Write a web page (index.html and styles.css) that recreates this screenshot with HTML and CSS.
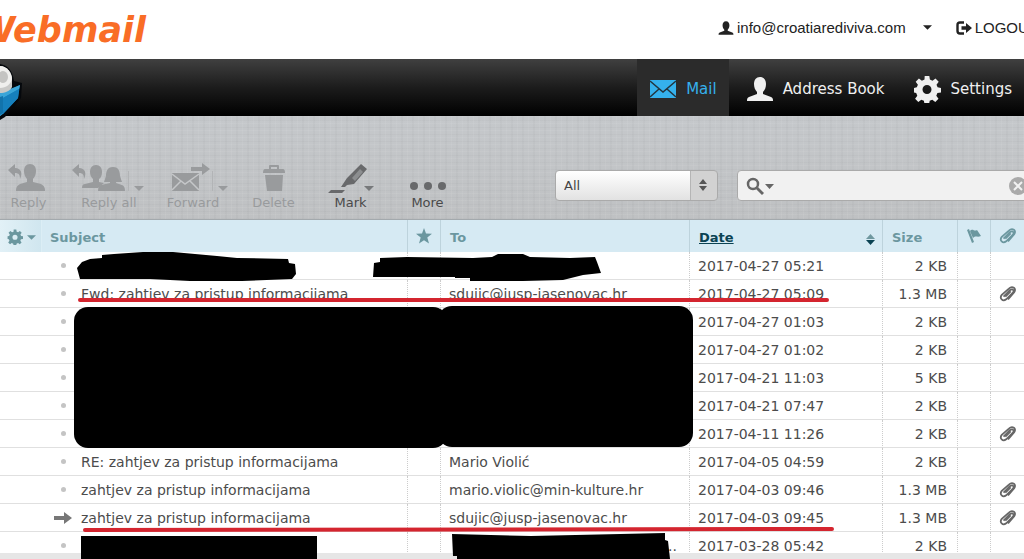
FILE: index.html
```html
<!DOCTYPE html>
<html lang="en">
<head>
    <meta charset="UTF-8">
    <meta name="viewport" content="width=device-width, initial-scale=1.0">
    <title>Webmail</title>
    <link rel="stylesheet" href="styles.css">
</head>
<body>
    <svg class="sprite" aria-hidden="true">
        <symbol id="person" viewBox="0 0 28 28">
            <path d="M14 2c4 0 6 3 6 7 0 3-1 6-3 8v2l8 3c2 1 2 2 2 4H1c0-2 0-3 2-4l8-3v-2c-2-2-3-5-3-8 0-4 2-7 6-7z"/>
        </symbol>
        <symbol id="gear" viewBox="0 0 28 28">
            <path fill-rule="evenodd" d="M11.700 1h4.600l.6 3.600 2.600 1.100 3-2.200 3.200 3.200-2.200 3 1.100 2.600 3.400.6v4.600l-3.600.6-1.100 2.600 2.200 3-3.200 3.200-3-2.200-2.600 1.100-.6 3.200h-4.600l-.6-3.200-2.600-1.100-3 2.200-3.200-3.200 2.200-3-1.100-2.600L1 17.500v-4.600l2.800-.6 1.100-2.600-2.200-3 3.200-3.200 3 2.200 2.600-1.100zM14 10a4.500 4.500 0 1 0 0 9 4.500 4.500 0 0 0 0-9z"/>
        </symbol>
        <symbol id="clip" viewBox="0 0 20 18">
            <path d="M5 12l7-7c3-3 6 0 3 3l-7 7c-4 3-8-1-5-5l8-7c4-4 9 0 6 4l-7 8" fill="none" stroke="currentColor" stroke-width="2"/>
            <path d="M7 12l6-6" fill="none" stroke="currentColor" stroke-width="2"/>
        </symbol>
        <symbol id="caret" viewBox="0 0 10 5"><path d="M0 0h10L5 5z"/></symbol>
    </svg>

    <header class="header">
        <a class="logo" href="#">Webmail</a>
        <div class="account">
            <a class="account-link" href="#">
                <svg width="16" height="16"><use href="#person"/></svg>
                info@croatiarediviva.com
                <svg class="account-caret" width="9" height="5"><use href="#caret"/></svg>
            </a>
            <a class="account-link" href="#">
                <svg width="16" height="14" viewBox="0 0 16 14"><path d="M8 1.500H4Q1.500 1.500 1.500 4v6q0 2.500 2.500 2.500h4" fill="none" stroke="#222" stroke-width="2.400"/><path d="M5.500 5.200H10V2l6 5-6 5V8.800H5.500z"/></svg>
                LOGOUT
            </a>
        </div>
    </header>

    <nav class="nav">
        <svg class="cube" width="24" height="58" viewBox="0 0 24 58" aria-hidden="true">
            <path d="M0 1Q12 3 14 18l8 2-1 15L5 54l-5 3z" fill="#05080c"/>
            <path d="M0 32l20-10-2 13L3 51l-3 2z" fill="#1680bd"/>
            <path d="M0 30l20-8-1 4L3 35v15l-3 3z" fill="#3aa5d8"/>
            <path d="M3 35l16-9-1 9L3 51z" fill="#1680bd"/>
            <path d="M0 34l3-1v17l-3 2z" fill="#1273ab"/>
            <path d="M0 3c7 0 12 7 12 13v8c-2 4-7 6-12 6z" fill="#c9c9c7"/>
            <path d="M0 3c7 0 12 7 12 13-1 5-6 9-12 9z" fill="#efefed"/>
            <ellipse cx="3" cy="14" rx="5" ry="6" fill="#c4c4c2"/>
        </svg>
        <a class="nav-item active" href="#">
            <svg width="28" height="28" viewBox="0 0 28 28"><path d="M1 5h26v18H1z"/><path d="M1 6l13 11L27 6M1 22l9-8M27 22l-9-8" fill="none" stroke="#23343d" stroke-width="1.500"/></svg>
            Mail
        </a>
        <a class="nav-item" href="#">
            <svg width="28" height="28"><use href="#person"/></svg>
            Address Book
        </a>
        <a class="nav-item" href="#">
            <svg width="28" height="28"><use href="#gear"/></svg>
            Settings
        </a>
    </nav>

    <div class="toolbar">
        <div class="tool">
            <button class="tool-button" disabled>
                <svg width="42" height="30" viewBox="0 0 42 30"><path d="M0 7l7-6v4c6 0 8 5 5 11 0-4-1-6-5-6v4z"/><path d="M22 1c4 0 6 3 6 7 0 3-1 6-3 8v3l8 2q4 2 4 6v1H8v-1q0-4 4-6l7-2v-3c-2-2-3-5-3-8 0-4 2-7 6-7z"/></svg>
                Reply
            </button>
        </div>
        <div class="tool split">
            <button class="tool-button" disabled>
                <svg width="74" height="30" viewBox="0 0 74 30"><path d="M0 7l7-6v4c6 0 8 5 5 11 0-4-1-6-5-6v4z"/><path d="M24 2c4 0 6 3 6 7 0 3-1 6-3 7v3l5 1-6 5H10q0-4 3-4l8-2v-3c-2-2-3-4-3-7 0-4 2-7 6-7z"/><path d="M41 4c6 0 7 5 7 9l2 6h-6v1l6 2q3 1 3 6H26q0-5 3-6l9-2v-1h-6l2-6c0-4 1-9 7-9z"/></svg>
                Reply all
            </button>
            <button class="caret-button" aria-label="Reply all options" disabled><svg width="10" height="5"><use href="#caret"/></svg></button>
        </div>
        <div class="tool split">
            <button class="tool-button" disabled>
                <svg width="44" height="30" viewBox="0 0 44 30"><path d="M20 4h11V0l8 6-8 6V8H20z"/><path d="M1 10h27v18H1z"/><path d="M1 11l13 10 14-10M1 27l9-9M28 27l-9-9" fill="none" stroke="#c5c7c9" stroke-width="1.500"/></svg>
                Forward
            </button>
            <button class="caret-button" aria-label="Forward options" disabled><svg width="10" height="5"><use href="#caret"/></svg></button>
        </div>
        <div class="tool">
            <button class="tool-button" disabled>
                <svg width="24" height="30" viewBox="0 0 24 30"><path d="M7 6V3q0-1 1-1h8q1 0 1 1v3h4q2 0 2 4H1q0-4 2-4zm2 0h6V4H9z" fill-rule="evenodd"/><path d="M3 12h18l-1 16H5z"/></svg>
                Delete
            </button>
        </div>
        <div class="tool mark">
            <button class="tool-button">
                <svg width="46" height="30" viewBox="0 0 46 30"><path d="M33 1l6 5-13 15-7 1-2 2h-4l6-9zM3 27h14l-3 3H0z"/><path d="M32 6l3 3-8 9-3-3z" fill="#8c8e90"/></svg>
                Mark
            </button>
            <button class="caret-button" aria-label="Mark options"><svg width="10" height="5"><use href="#caret"/></svg></button>
        </div>
        <div class="tool">
            <button class="tool-button">
                <svg width="36" height="30" viewBox="0 0 36 30"><circle cx="4" cy="23" r="4"/><circle cx="18" cy="23" r="4"/><circle cx="32" cy="23" r="4"/></svg>
                More
            </button>
        </div>
        <div class="filters">
            <div class="select-box">
                <select aria-label="Filter messages"><option>All</option></select>
                <svg width="10" height="12" viewBox="0 0 10 12"><path d="M1 5l4-5 4 5zM1 7h8l-4 5z"/></svg>
            </div>
            <div class="search">
                <svg width="30" height="18" viewBox="0 0 30 18"><circle cx="7" cy="7" r="5" fill="none" stroke="#666" stroke-width="2.500"/><path d="M10 12l2-2 6 6-2 2zM19 7h9l-4.500 5z"/></svg>
                <input type="text" aria-label="Search">
                <button class="clear" aria-label="Clear search"><svg width="18" height="18" viewBox="0 0 18 18"><circle cx="9" cy="9" r="9"/><path d="M5 5l8 8M13 5l-8 8" stroke="#f1f1f1" stroke-width="2"/></svg></button>
            </div>
        </div>
    </div>

    <main class="messages">
        <table>
            <colgroup>
                <col class="col-options"><col><col class="col-icon"><col class="col-to"><col class="col-date"><col class="col-size"><col class="col-icon"><col class="col-icon">
            </colgroup>
            <thead>
                <tr>
                    <th class="options"><button class="options-button" aria-label="List options"><svg width="16" height="16"><use href="#gear"/></svg><svg width="9" height="5"><use href="#caret"/></svg></button></th>
                    <th class="subject-head">Subject</th>
                    <th class="icon-cell"><svg width="18" height="18" viewBox="0 0 18 18"><path d="M9 1l2 5.500 6 .3-4.700 3.800L14 16.500l-5-3.300-5 3.300 1.700-5.900L1 6.800l6-.3z"/></svg></th>
                    <th>To</th>
                    <th class="sorted"><a href="#">Date</a><svg width="9" height="11" viewBox="0 0 9 11"><path d="M0 5l4.500-5L9 5z" fill="#6f989f"/><path d="M0 6h9l-4.500 5z" fill="#0b4353"/></svg></th>
                    <th>Size</th>
                    <th class="icon-cell"><svg width="16" height="16" viewBox="0 0 16 16"><path d="M1 2l2-1 5 13-2 1zM4 3c3-3 4 1 7-1l4 6c-4 2-5-1-8 2z"/></svg></th>
                    <th class="icon-cell"><svg width="18" height="16"><use href="#clip"/></svg></th>
                </tr>
            </thead>
            <tbody>
                <tr><td colspan="2"><span class="subject"><i class="dot"></i></span></td><td></td><td></td><td>2017-04-27 05:21</td><td class="size">2 KB</td><td></td><td></td></tr>
                <tr><td colspan="2"><span class="subject"><i class="dot"></i>Fwd: zahtjev za pristup informacijama</span></td><td></td><td>sdujic@jusp-jasenovac.hr</td><td>2017-04-27 05:09</td><td class="size">1.3 MB</td><td></td><td class="icon-cell"><svg width="18" height="16"><use href="#clip"/></svg></td></tr>
                <tr><td colspan="2"><span class="subject"><i class="dot"></i></span></td><td></td><td></td><td>2017-04-27 01:03</td><td class="size">2 KB</td><td></td><td></td></tr>
                <tr><td colspan="2"><span class="subject"><i class="dot"></i></span></td><td></td><td></td><td>2017-04-27 01:02</td><td class="size">2 KB</td><td></td><td></td></tr>
                <tr><td colspan="2"><span class="subject"><i class="dot"></i></span></td><td></td><td></td><td>2017-04-21 11:03</td><td class="size">5 KB</td><td></td><td></td></tr>
                <tr><td colspan="2"><span class="subject"><i class="dot"></i></span></td><td></td><td></td><td>2017-04-21 07:47</td><td class="size">2 KB</td><td></td><td></td></tr>
                <tr><td colspan="2"><span class="subject"><i class="dot"></i></span></td><td></td><td></td><td>2017-04-11 11:26</td><td class="size">2 KB</td><td></td><td class="icon-cell"><svg width="18" height="16"><use href="#clip"/></svg></td></tr>
                <tr><td colspan="2"><span class="subject"><i class="dot"></i>RE: zahtjev za pristup informacijama</span></td><td></td><td>Mario Violić</td><td>2017-04-05 04:59</td><td class="size">2 KB</td><td></td><td></td></tr>
                <tr><td colspan="2"><span class="subject"><i class="dot"></i>zahtjev za pristup informacijama</span></td><td></td><td>mario.violic@min-kulture.hr</td><td>2017-04-03 09:46</td><td class="size">1.3 MB</td><td></td><td class="icon-cell"><svg width="18" height="16"><use href="#clip"/></svg></td></tr>
                <tr><td colspan="2"><span class="subject"><svg class="forwarded" width="18" height="12" viewBox="0 0 18 12"><path d="M0 4h10V0l8 6-8 6V8H0z"/></svg>zahtjev za pristup informacijama</span></td><td></td><td>sdujic@jusp-jasenovac.hr</td><td>2017-04-03 09:45</td><td class="size">1.3 MB</td><td></td><td class="icon-cell"><svg width="18" height="16"><use href="#clip"/></svg></td></tr>
                <tr><td colspan="2"><span class="subject"><i class="dot"></i></span></td><td></td><td class="cut">...</td><td>2017-03-28 05:42</td><td class="size">2 KB</td><td></td><td></td></tr>
            </tbody>
        </table>

        <!-- Redactions and underlines drawn over the list -->
        <svg class="marks" width="1024" height="339" viewBox="0 220 1024 339" aria-hidden="true">
            <path d="M77 268l5-6 8-3 12-1v-3l12-1 29-2h30l44 4 20 2 51 1 1 4 6 1 1 10-4 5-50 2h-52l-40-2H80z"/>
            <path d="M373 277l1-14 6-1v-4l27-1 66 1 19-1 6-3h25l7 3 40 1 25-1 2 5 4 11-18 2-20 5-40 1h-53v-3h-15v-1z"/>
            <rect x="74" y="307" width="373" height="141" rx="14"/>
            <rect x="438" y="306" width="255" height="141" rx="14"/>
            <path d="M81 536h236v23H81z"/>
            <path d="M452 534l79 2 134-3v7l3 1 2 18H457v-3h-4z"/>
            <path d="M80 300h747M85 530l747-1" class="underline"/>
        </svg>
    </main>
    <footer class="statusbar"></footer>
</body>
</html>
```
FILE: styles.css
```css
* {
    box-sizing: border-box;
}
body {
    display: flex;
    flex-direction: column;
    height: 100vh;
    margin: 0;
    overflow: hidden;
    background: #fff;
    font-family: Verdana, "DejaVu Sans", sans-serif;
    font-size: 13px;
    color: #444;
}
svg {
    fill: currentColor;
    flex: none;
}
a {
    color: inherit;
    text-decoration: none;
}
button {
    padding: 0;
    border: none;
    background: none;
    font: inherit;
    color: inherit;
}
.sprite {
    position: absolute;
    width: 0;
    height: 0;
}

/* Header */
.header {
    display: flex;
    justify-content: space-between;
    align-items: center;
    height: 59px;
    overflow: hidden;
}
.logo {
    display: flex;
    justify-content: flex-end;
    width: 146px;
    color: #f96d26;
    font-size: 35px;
    font-weight: bold;
    font-style: italic;
}
.account {
    display: flex;
    gap: 24px;
    margin-right: -14px;
    padding-bottom: 4px;
    font-family: "Liberation Sans", Arial, sans-serif;
    font-size: 15px;
    color: #222;
}
.account-link {
    display: flex;
    align-items: center;
    gap: 3px;
}
.account-caret {
    margin-left: 14px;
}

/* Main navigation */
.nav {
    position: relative;
    display: flex;
    justify-content: flex-end;
    gap: 5px;
    height: 57px;
    background: linear-gradient(#404040, #1c1c1c 50%, #000);
    font-size: 15px;
    color: #f0f0f0;
}
.cube {
    position: absolute;
    left: 0;
    top: 4px;
    z-index: 1;
}
.nav-item {
    display: flex;
    align-items: center;
    gap: 9px;
    padding: 2px 12px 0;
}
.nav-item.active {
    background: #2b2b2b;
    color: #35b1ec;
}

/* Toolbar */
.toolbar {
    display: flex;
    align-items: flex-start;
    height: 104px;
    padding-top: 47px;
    overflow: hidden;
    background:
        repeating-linear-gradient(90deg, rgba(255,255,255,0.06) 0 1px, transparent 1px 5px, rgba(0,0,0,0.02) 5px 7px, transparent 7px 11px),
        repeating-linear-gradient(rgba(255,255,255,0.06) 0 1px, transparent 1px 4px, rgba(0,0,0,0.02) 4px 5px, transparent 5px 7px),
        linear-gradient(#c5c8cb, #bfc1c3);
    border-bottom: 1px solid #a3a9ad;
}
.tool {
    position: relative;
    flex: none;
    width: 77px;
}
.tool:first-child {
    margin-left: -10px;
}
.tool.split {
    width: 84px;
}
.tool-button {
    display: flex;
    flex-direction: column;
    align-items: center;
    width: 100%;
    line-height: 19px;
    color: #4a4a4a;
}
.tool-button svg {
    color: #68696b;
}
.tool-button:disabled,
.tool-button:disabled svg,
.caret-button:disabled {
    color: #999b9d;
}
.caret-button {
    position: absolute;
    top: 8px;
    right: 7px;
    display: flex;
    align-items: flex-end;
    height: 20px;
    color: #77797b;
}
.split .caret-button {
    padding-left: 5px;
    border-left: 1px solid #b2b4b6;
}
.mark .caret-button {
    right: 15px;
}
.filters {
    display: flex;
    gap: 19px;
    margin: 7px -12px 0 auto;
}
.select-box {
    position: relative;
    width: 163px;
    height: 31px;
    color: #555;
}
.select-box select {
    width: 100%;
    height: 100%;
    padding: 0 8px;
    appearance: none;
    border: 1px solid #aaa;
    border-radius: 4px;
    background: linear-gradient(90deg, transparent 134px, #b5b5b5 134px 135px, #d2d2d2 135px), linear-gradient(#fff, #e2e2e2);
    font: inherit;
    color: #444;
}
.select-box svg {
    position: absolute;
    right: 10px;
    top: 9px;
    pointer-events: none;
}
.search {
    display: flex;
    align-items: center;
    width: 299px;
    height: 31px;
    padding: 0 8px;
    border: 1px solid #aaa;
    border-radius: 4px;
    background: #f1f1f1;
    color: #666;
}
.search input {
    flex: 1;
    min-width: 0;
    border: none;
    background: none;
    font: inherit;
}
.clear {
    display: flex;
    color: #aaa;
}

/* Message list */
.messages {
    position: relative;
    flex: 1;
    min-height: 0;
}
table {
    width: 100%;
    table-layout: fixed;
    border-collapse: separate;
    border-spacing: 0;
}
.col-options {
    width: 42px;
}
.col-icon {
    width: 33px;
}
.col-to {
    width: 249px;
}
.col-date {
    width: 193px;
}
.col-size {
    width: 75px;
}
th {
    height: 32px;
    padding: 2px 9px 0;
    border-right: 1px solid #bdd3dc;
    background: #d6eaf3;
    text-align: left;
    color: #6b979f;
}
th.options {
    padding: 2px 0 0 7px;
    border-right-color: #dceef5;
    background: linear-gradient(90deg, #e2f1f7, #d0e6ef);
}
.subject-head {
    padding-left: 8px;
}
.options-button {
    display: flex;
    align-items: center;
    gap: 4px;
}
.sorted a {
    color: #0b4353;
    text-decoration: underline;
}
.sorted svg {
    float: right;
    margin: 4px -2px 0 0;
}
th.icon-cell,
td.icon-cell {
    padding: 0;
    text-align: center;
}
.icon-cell svg {
    vertical-align: middle;
}
td {
    height: 28px;
    padding: 0 7px 0 8px;
    border-right: 1px dotted #ccc;
    border-bottom: 1px solid #e0e0e0;
    font-size: 14px;
    white-space: nowrap;
    color: #4c4c4c;
}
td.icon-cell {
    color: #666;
}
td.size {
    padding-right: 10px;
    text-align: right;
}
td.cut {
    padding-right: 12px;
    text-align: right;
}
td:last-child,
th:last-child {
    border-right: none;
}
.subject {
    display: flex;
    align-items: center;
    justify-content: flex-start;
    padding-left: 46px;
}
.dot {
    width: 5px;
    height: 5px;
    margin: 0 15px 0 7px;
    border-radius: 50%;
    background: #c4c4c4;
}
.forwarded {
    margin-right: 9px;
    color: #777;
}
.marks {
    position: absolute;
    left: 0;
    top: 0;
    z-index: 2;
    color: #000;
    pointer-events: none;
}
.underline {
    fill: none;
    stroke: #d4252f;
    stroke-width: 4;
    stroke-linecap: round;
}
.statusbar {
    position: relative;
    z-index: 1;
    height: 6px;
    background: #e6e6e6;
}
```
